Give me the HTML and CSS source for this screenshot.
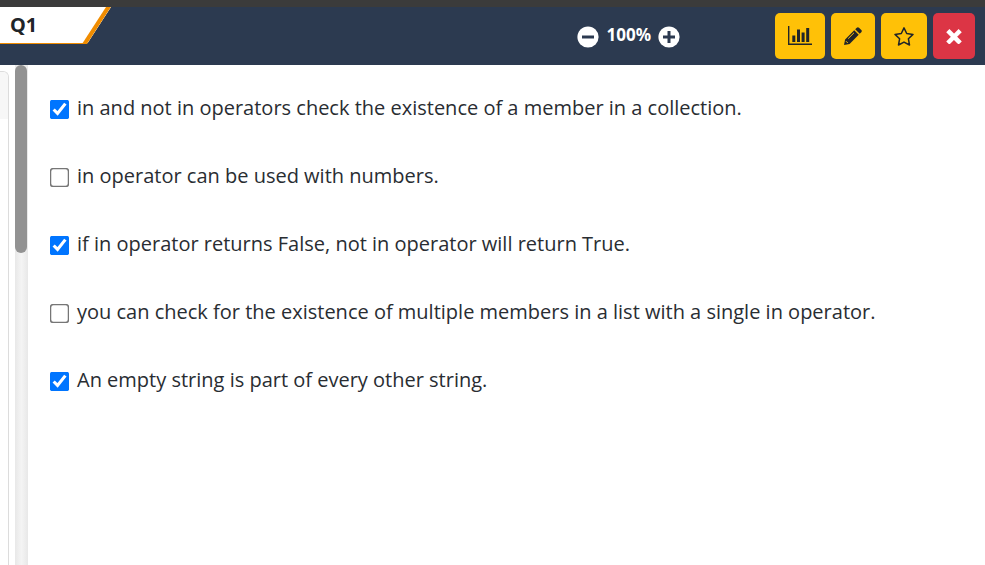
FILE: index.html
```html
<!DOCTYPE html>
<html lang="en">
<head>
<meta charset="utf-8">
<meta name="viewport" content="width=device-width, initial-scale=1">
<title>Q1</title>
<link rel="stylesheet" href="styles.css">
</head>
<body>
<header class="topbar">
  <h1 class="tab">Q1</h1>
  <div class="zoom">
    <button class="zoom-button" type="button" aria-label="Zoom out">
      <svg viewBox="0 0 22 22" width="22" height="22"><circle cx="11" cy="11" r="10.6" fill="#fff"/><path d="M5 11h12" stroke="#2c3a50" stroke-width="3"/></svg>
    </button>
    <span class="zoom-level">100%</span>
    <button class="zoom-button" type="button" aria-label="Zoom in">
      <svg viewBox="0 0 22 22" width="22" height="22"><circle cx="11" cy="11" r="10.6" fill="#fff"/><path d="M5 11h12M11 5v12" stroke="#2c3a50" stroke-width="3"/></svg>
    </button>
  </div>
  <div class="actions">
    <button class="action" type="button" aria-label="Statistics">
      <svg viewBox="0 0 24 20" width="24" height="20"><path d="M0 0h1.400v17.400H24V19H0zM4.300 9.500h3V16h-3zM9 3.500h3V16H9zM13.600 6.500h3V16h-3zM18.200 2h3V16h-3z" fill="#212529"/></svg>
    </button>
    <button class="action" type="button" aria-label="Edit">
      <svg viewBox="0 0 18 18" width="18" height="18"><path fill="#212529" d="M10.200 3.300L14.700 7.800L5.600 16.900L0 18L1.100 12.400ZM11.200 2.300L12.800.7Q13.900-.4 15 .7L17.300 3Q18.400 4.100 17.300 5.200L15.700 6.800Z"/><path d="M4.200 11.600L10 5.800M2 14.200L3.800 16" stroke="#ffc107" stroke-width="1" fill="none"/></svg>
    </button>
    <button class="action" type="button" aria-label="Favourite">
      <svg viewBox="0 0 20 19" width="20" height="19"><path d="M10 .9L12.700 6.500L19 7.400L14.400 11.800L15.500 18L10 15.100L4.500 18L5.600 11.800L1 7.400L7.300 6.500Z" fill="none" stroke="#212529" stroke-width="1.500" stroke-linejoin="round"/></svg>
    </button>
    <button class="action action-close" type="button" aria-label="Close">
      <svg viewBox="0 0 16 16" width="16" height="16"><path d="M3.400 4.200L12.600 13.400M12.600 4.200L3.400 13.400" stroke="#fff" stroke-width="4.500" stroke-linecap="square"/></svg>
    </button>
  </div>
</header>
<main class="workspace">
  <aside class="question"><div class="question-head"></div></aside>
  <div class="scrollbar"><div class="scrollbar-thumb"></div></div>
  <form class="options">
    <label class="option"><input type="checkbox" checked><span>in and not in operators check the existence of a member in a collection.</span></label>
    <label class="option"><input type="checkbox"><span>in operator can be used with numbers.</span></label>
    <label class="option"><input type="checkbox" checked><span>if in operator returns False, not in operator will return True.</span></label>
    <label class="option"><input type="checkbox"><span>you can check for the existence of multiple members in a list with a single in operator.</span></label>
    <label class="option"><input type="checkbox" checked><span>An empty string is part of every other string.</span></label>
  </form>
</main>
</body>
</html>
```
FILE: styles.css
```css
* {
  box-sizing: border-box;
}

body {
  margin: 0;
  min-height: 100vh;
  display: flex;
  flex-direction: column;
  background: #fff;
  color: #292d32;
  font-family: "Noto Sans", "Open Sans", sans-serif;
  overflow: hidden;
}

button {
  border: 0;
  padding: 0;
  font: inherit;
  cursor: pointer;
}

svg {
  display: block;
}

.topbar {
  display: flex;
  align-items: flex-start;
  border-top: 7px solid #3b3b3b;
  background: #2c3a50;
  padding-right: 10px;
}

.tab {
  width: 111px;
  height: 37px;
  margin: 0;
  padding-left: 10px;
  font-size: 20px;
  line-height: 36px;
  font-weight: 700;
  color: #212529;
  background: linear-gradient(#fff, #fff) padding-box, #f08c00;
  border-bottom: 1px solid transparent;
  clip-path: polygon(0 0, 100% 0, 87px 100%, 0 100%);
  position: relative;
}

.tab::after {
  content: "";
  position: absolute;
  inset: 0 0 -1px;
  background: #f08c00;
  clip-path: polygon(106px 0, 100% 0, 87px 100%, 82px 100%);
}

.zoom {
  display: flex;
  align-items: flex-start;
  gap: 7px;
  margin: 16px 95px 0 auto;
}

.zoom-button {
  margin-top: 3px;
  background: none;
}

.zoom-level {
  color: #fff;
  font-size: 17px;
  line-height: 24px;
  font-weight: 700;
}

.actions {
  display: flex;
  gap: 6px;
  padding: 6px 0;
}

.action {
  padding: 0 13px;
  height: 46px;
  border-radius: 5px;
  background: #ffc107;
}

.action-close {
  background: #dc3545;
}

.workspace {
  flex: 1;
  display: flex;
}

.question {
  width: 9px;
  margin: 6px 6px 0 0;
  border: 1px solid #dcdcdc;
  border-width: 1px 1px 0 0;
  border-radius: 0 6px 0 0;
}

.question-head {
  height: 47px;
  background: #f7f7f7;
  border-radius: 0 5px 0 0;
}

.scrollbar {
  width: 13px;
  background: linear-gradient(90deg, #e8e8e8, #f4f4f4 50%, #e8e8e8);
}

.scrollbar-thumb {
  width: 12px;
  height: 188px;
  border-radius: 6px;
  background: #929292;
}

.options {
  flex: 1;
  display: flex;
  flex-direction: column;
  gap: 38px;
  padding: 28px 22px;
}

.option {
  display: flex;
  align-items: center;
  gap: 8px;
  font-family: "Open Sans", "Noto Sans", sans-serif;
  font-size: 20px;
  line-height: 30px;
}

.option input {
  width: 13px;
  height: 13px;
  margin: 3px 3px 0;
  flex: none;
  accent-color: #0075ff;
  transform: scale(1.5);
}
```
